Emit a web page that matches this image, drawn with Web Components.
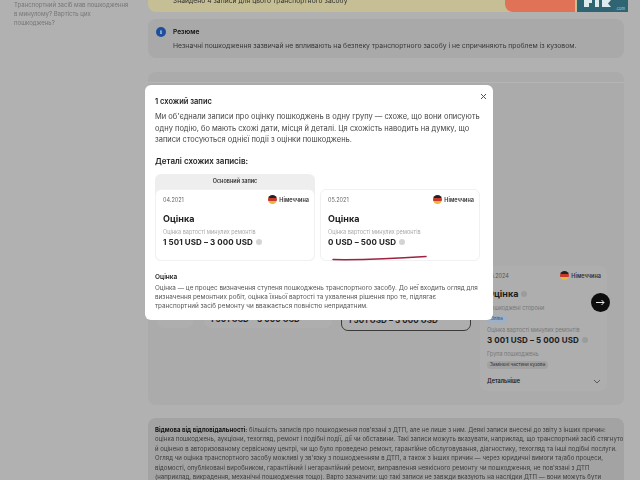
<!DOCTYPE html>
<html lang="uk">
<head>
<meta charset="utf-8">
<title>Оцінка</title>
<style>
  html, body { margin: 0; height: 480px; overflow: hidden; background: #b1b1b1; }
  body { font-family: Inter, "Liberation Sans", sans-serif; color: #222; }
</style>
</head>
<body>
<report-page>
  <span slot="sidebar">Транспортний засіб мав пошкодження<br>в минулому? Вартість цих<br>пошкоджень?</span>

  <record-banner>Знайдено 4 записи для цього транспортного засобу</record-banner>

  <summary-note heading="Резюме">Незначні пошкодження зазвичай не впливають на безпеку транспортного засобу і не спричиняють проблем із кузовом.</summary-note>

  <damage-section>
    <stub-card style="width:36px"></stub-card>
    <stub-card style="width:128px;margin-left:2px" price="1 501 USD – 3 000 USD"></stub-card>
    <stub-card style="width:130px" price="1 501 USD – 3 000 USD" selected></stub-card>
    <detail-card></detail-card>
  </damage-section>

  <disclaimer-note>
    <b>Відмова від відповідальності:</b> більшість записів про пошкодження пов'язані з ДТП, але не лише з ним. Деякі записи внесені до звіту з інших причин:<br>
    оцінка пошкоджень, аукціони, техогляд, ремонт і подібні події, дії чи обставини. Такі записи можуть вказувати, наприклад, що транспортний засіб стягнуто<br>
    й оцінено в авторизованому сервісному центрі, чи що було проведено ремонт, гарантійне обслуговування, діагностику, техогляд та інші подібні послуги.<br>
    Огляд чи оцінка транспортного засобу можливі у зв'язку з пошкодженням в ДТП, а також з інших причин — через юридичні вимоги та/або процеси,<br>
    відомості, опубліковані виробником, гарантійний і негарантійний ремонт, виправлення неякісного ремонту чи пошкодження, не пов'язані з ДТП<br>
    (наприклад, викрадення, механічні пошкодження тощо). Варто зазначити: що такі записи не завжди вказують на наслідки ДТП — вони можуть бути
  </disclaimer-note>
</report-page>

<similar-dialog>
  <span slot="title">1 схожий запис</span>
  <span slot="intro">Ми об'єднали записи про оцінку пошкоджень в одну групу — схоже, що вони описують<br>одну подію, бо мають схожі дати, місця й деталі. Ця схожість наводить на думку, що<br>записи стосуються однієї події з оцінки пошкоджень.</span>
  <span slot="subtitle">Деталі схожих записів:</span>
  <record-card slot="cards" date="04.2021" price="1 501 USD – 3 000 USD" main></record-card>
  <record-card slot="cards" date="05.2021" price="0 USD – 500 USD" marked></record-card>
  <span slot="term">Оцінка</span>
  <span slot="definition">Оцінка — це процес визначення ступеня пошкоджень транспортного засобу. До неї входить огляд для<br>визначення ремонтних робіт, оцінка їхньої вартості та ухвалення рішення про те, підлягає<br>транспортний засіб ремонту чи вважається повністю непридатним.</span>
</similar-dialog>

<script>
const FLAG = `
  <svg width="9" height="9" viewBox="0 0 9 9" aria-hidden="true">
    <clipPath id="c"><circle cx="4.5" cy="4.5" r="4.5"/></clipPath>
    <g clip-path="url(#c)">
      <rect width="9" height="3" fill="#222"/>
      <rect y="3" width="9" height="3" fill="#c8392b"/>
      <rect y="6" width="9" height="3" fill="#e8b93a"/>
    </g>
  </svg>`;

const INFO = `<i style="display:inline-block;width:6px;height:6px;border-radius:50%;background:var(--dot,#d4d4d4);margin-left:3px"></i>`;

function define(name, html, extra) {
  const template = document.createElement("template");
  template.innerHTML = html;
  class Base extends HTMLElement {
    constructor() {
      super();
      this.attachShadow({ mode: "open" });
      this.shadowRoot.appendChild(template.content.cloneNode(true));
    }
    connectedCallback() {
      if (extra) extra(this, this.shadowRoot);
    }
  }
  window.customElements.define(name, Base);
}

define("report-page", `
  <style>
    :host {
      display: grid;
      grid-template-columns: 148px 476px;
      height: 510px;
      margin-top: -30px;
      filter: blur(.55px);
    }
    .side {
      padding: 30px 10px 0 14px;
      font-size: 6px;
      line-height: 9px;
      color: #767676;
      white-space: nowrap;
    }
    .main { display: flex; flex-direction: column; }
  </style>
  <div class="side"><slot name="sidebar"></slot></div>
  <div class="main"><slot></slot></div>
`);

define("record-banner", `
  <style>
    :host {
      display: flex;
      height: 42px;
      margin-bottom: 7px;
      margin-right: -4px;
      background: #c6bf96;
      border-radius: 0 0 8px 8px;
      font-size: 6.7px;
      letter-spacing: .05px;
      color: #2d2d2a;
    }
    .text { flex: 1; padding: 27px 0 0 25px; white-space: nowrap; }
    .promo {
      width: 70px;
      background: #e07355;
      border-radius: 0 0 0 8px;
      margin-right: 2px;
    }
    .logo {
      width: 51px;
      background: #2f6473;
      position: relative;
      color: #b9d3da;
      font-size: 4px;
      text-align: right;
      box-sizing: border-box;
      padding: 36px 3px 0 0;
    }
    .logo svg { position: absolute; left: 6px; top: 30px; }
  </style>
  <div class="text"><slot></slot></div>
  <div class="promo"></div>
  <div class="logo">
    <svg width="30" height="7" viewBox="0 0 30 7"><path d="M1 0h8v3H6v4H1zM12 0h4v7h-4zM19 0h9l-3 3.5 3 3.5h-9z" fill="#dcebee"/></svg>
    .com
  </div>
`);

define("summary-note", `
  <style>
    :host {
      display: flex;
      gap: 7px;
      height: 39px;
      box-sizing: border-box;
      margin-bottom: 14px;
      padding: 8px 8px;
      background: #a9a9a9;
      border-radius: 8px;
    }
    .icon {
      flex: none;
      width: 10px;
      height: 10px;
      border-radius: 50%;
      background: #1d4f9e;
      color: #d5dff0;
      font: 700 7px/10px "Liberation Serif", serif;
      text-align: center;
    }
    h4 { margin: 0 0 4px; font-size: 6.6px; line-height: 10px; font-weight: 600; color: #111; }
    p { margin: 0; font-size: 6.8px; line-height: 9px; color: #383838; white-space: nowrap; }
  </style>
  <div class="icon">i</div>
  <div>
    <h4></h4>
    <p><slot></slot></p>
  </div>
`, (el, root) => {
  root.querySelector("h4").textContent = el.getAttribute("heading");
});

define("damage-section", `
  <style>
    :host {
      display: block;
      height: 333px;
      box-sizing: border-box;
      margin-bottom: 13px;
      background: #ababab;
      border-radius: 8px;
      padding-top: 10px;
      overflow: hidden;
    }
    hr { border: 0; border-top: 1px solid #b5b5b5; margin: 0 0 183px; }
    .row {
      display: flex;
      align-items: flex-start;
      gap: 9px;
      padding-left: 9px;
    }
  </style>
  <hr>
  <div class="row"><slot></slot></div>
`);

define("stub-card", `
  <style>
    :host {
      display: flex;
      flex: none;
      align-items: flex-end;
      height: 62px;
      box-sizing: border-box;
      padding: 0 0 4px 6px;
      background: #aeaeae;
      border-radius: 7px;
      font-size: 8px;
      font-weight: 700;
      letter-spacing: .1px;
      color: #1e1e1e;
      white-space: nowrap;
    }
    :host([selected]) {
      height: 65px;
      padding-bottom: 5px;
      border: 1.5px solid #3a3a3a;
    }
  </style>
  <span></span>
`, (el, root) => {
  root.querySelector("span").textContent = el.getAttribute("price") || "";
});

define("detail-card", `
  <style>
    :host {
      display: block;
      flex: none;
      position: relative;
      width: 127px;
      height: 125px;
      box-sizing: border-box;
      padding: 5px 6px 0 7px;
      background: #aeaeae;
      border-radius: 7px;
      color: #1c1c1c;
      --dot: #9c9c9c;
    }
    .top { display: flex; justify-content: space-between; align-items: center; font-size: 5.5px; color: #555; height: 9px; }
    .country { display: flex; align-items: center; gap: 2px; font-weight: 600; color: #333; }
    h3 { margin: 7px 0 0; font-size: 9px; line-height: 14px; font-weight: 700; }
    .label { font-size: 5.5px; line-height: 8px; color: #777; }
    .chips { display: flex; align-items: center; height: 10px; margin-top: 2px; }
    .chip {
      font-size: 4.6px;
      line-height: 8px;
      padding: 0 3px;
      border-radius: 4px;
      background: #a2a2a2;
      color: #2c2c2c;
      white-space: nowrap;
    }
    .chip.blue { background: #9db0c6; color: #264a78; padding: 0 4px; }
    .price { font-size: 8px; line-height: 11px; font-weight: 700; letter-spacing: .1px; white-space: nowrap; margin-top: 1px; }
    .more { display: flex; justify-content: space-between; align-items: center; margin-top: 8px; font-size: 5.5px; font-weight: 600; }
    .go {
      position: absolute;
      right: -3px;
      top: 27px;
      width: 19px;
      height: 19px;
      border-radius: 50%;
      background: #0d0d0d;
      display: grid;
      place-items: center;
    }
  </style>
  <div class="top"><span>05.2024</span><span class="country">${FLAG}Німеччина</span></div>
  <h3>Оцінка${INFO}</h3>
  <div class="label" style="margin-top:3px">Пошкоджені сторони</div>
  <div class="chips"><span class="chip blue">Зліва</span></div>
  <div class="label" style="margin-top:2px">Оцінка вартості минулих ремонтів</div>
  <div class="price">3 001 USD – 5 000 USD${INFO}</div>
  <div class="label" style="margin-top:4px">Група пошкоджень</div>
  <div class="chips"><span class="chip">Замінені частини кузова</span></div>
  <div class="more"><span>Детальніше</span>
    <svg width="8" height="5" viewBox="0 0 8 5"><path d="M1 1l3 3 3-3" fill="none" stroke="#5a5a5a" stroke-width="1"/></svg>
  </div>
  <div class="go">
    <svg width="9" height="7" viewBox="0 0 9 7"><path d="M0 3.5h8M5.5 1L8 3.5 5.5 6" fill="none" stroke="#e8e8e8" stroke-width="1"/></svg>
  </div>
`);

define("disclaimer-note", `
  <style>
    :host {
      display: block;
      height: 62px;
      box-sizing: border-box;
      padding: 7px 7px;
      background: #a3a3a3;
      border-radius: 8px 8px 0 0;
      font-size: 6px;
      letter-spacing: .05px;
      line-height: 9.4px;
      color: #3a3a3a;
      white-space: nowrap;
      overflow: hidden;
    }
    ::slotted(b) { color: #111; font-weight: 700; }
  </style>
  <slot></slot>
`);

define("similar-dialog", `
  <style>
    :host {
      position: fixed;
      inset: 0;
      display: block;
    }
    .dialog {
      position: absolute;
      left: 145px;
      top: 85px;
      width: 348px;
      height: 235px;
      box-sizing: border-box;
      padding: 11px 10px 0;
      background: #fff;
      border-radius: 6px;
      filter: blur(.4px);
      color: #333;
    }
    .close { position: absolute; right: 6px; top: 8px; }
    h2 { margin: 0 0 4px; font-size: 7.5px; line-height: 11px; font-weight: 600; color: #222; }
    .intro { margin: 0 0 10px; font-size: 7.5px; line-height: 11.5px; color: #444; white-space: nowrap; }
    h3 { margin: 0 0 7px; font-size: 8px; line-height: 11px; font-weight: 600; color: #222; }
    .cards { display: flex; align-items: flex-end; gap: 5px; height: 87px; }
    .term { margin: 12px 0 2px; font-size: 6.5px; line-height: 9px; font-weight: 600; color: #222; }
    .definition { margin: 0; font-size: 6.35px; line-height: 9.2px; color: #555; white-space: nowrap; }
  </style>
  <div class="dialog" role="dialog">
    <svg class="close" width="7" height="7" viewBox="0 0 7 7"><path d="M1 1l5 5M6 1L1 6" stroke="#555" stroke-width="1" fill="none"/></svg>
    <h2><slot name="title"></slot></h2>
    <p class="intro"><slot name="intro"></slot></p>
    <h3><slot name="subtitle"></slot></h3>
    <div class="cards"><slot name="cards"></slot></div>
    <p class="term"><slot name="term"></slot></p>
    <p class="definition"><slot name="definition"></slot></p>
  </div>
`);

define("record-card", `
  <style>
    :host {
      display: block;
      position: relative;
      flex: none;
      width: 160px;
      box-sizing: border-box;
      border-radius: 6px;
    }
    :host([main]) { background: #eeeeee; }
    .head { text-align: center; font-size: 5.5px; line-height: 15px; font-weight: 600; color: #333; }
    .body {
      height: 72px;
      box-sizing: border-box;
      padding: 5px 5px 0 7px;
      background: #fff;
      border: 1px solid #f1f1f1;
      border-radius: 6px;
    }
    .top { display: flex; justify-content: space-between; align-items: center; height: 10px; font-size: 5.5px; color: #666; }
    .country { display: flex; align-items: center; gap: 2px; font-weight: 600; color: #333; }
    h4 { margin: 7px 0 0; font-size: 9px; line-height: 14px; font-weight: 700; color: #222; }
    .label { font-size: 5.5px; line-height: 8px; margin-top: 2px; color: #a8a8a8; }
    .price { font-size: 8px; line-height: 12px; font-weight: 700; letter-spacing: .1px; color: #222; white-space: nowrap; }
    .mark { position: absolute; left: 12px; bottom: 0; }
  </style>
  <div class="head"></div>
  <div class="body">
    <div class="top"><span class="date"></span><span class="country">${FLAG}Німеччина</span></div>
    <h4>Оцінка</h4>
    <div class="label">Оцінка вартості минулих ремонтів</div>
    <div class="price"><span class="value"></span>${INFO}</div>
  </div>
`, (el, root) => {
  root.querySelector(".date").textContent = el.getAttribute("date");
  root.querySelector(".value").textContent = el.getAttribute("price");
  const head = root.querySelector(".head");
  if (el.hasAttribute("main")) head.textContent = "Основний запис";
  else head.remove();
  if (el.hasAttribute("marked")) {
    root.appendChild(document.createRange().createContextualFragment(`
      <svg class="mark" width="96" height="6" viewBox="0 0 96 6">
        <path d="M1 4.6C30 5 65 3.6 94 1.6" fill="none" stroke="#9e2340" stroke-width="1.5" stroke-linecap="round"/>
      </svg>`));
  }
});
</script>
</body>
</html>
